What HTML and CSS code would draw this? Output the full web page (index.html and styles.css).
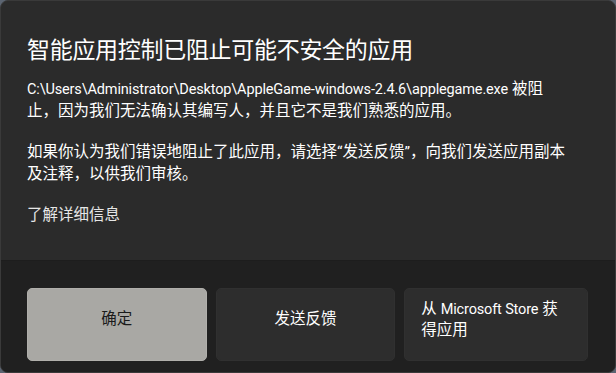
FILE: index.html
```html
<!DOCTYPE html>
<html lang="zh-CN">
<head>
  <meta charset="UTF-8">
  <title>智能应用控制</title>
  <link rel="stylesheet" href="styles.css">
</head>
<body>

  <div class="dialog">
    <div class="content">
      <h1 class="title">智能应用控制已阻止可能不安全的应用</h1>
      <p class="message"><span class="path">C:\Users\Administrator\Desktop\AppleGame-windows-2.4.6\applegame.exe</span> 被阻止，因为我们无法确认其编写人，并且它不是我们熟悉的应用。</p>
      <p class="message">如果你认为我们错误地阻止了此应用，请选择“发送反馈”，向我们发送应用副本及注释，以供我们审核。</p>
      <a class="more" href="#">了解详细信息</a>
    </div>

    <div class="footer">
      <button class="btn btn-primary">确定</button>
      <button class="btn">发送反馈</button>
      <button class="btn btn-left">从 <span class="latin">Microsoft Store</span> 获得应用</button>
    </div>
  </div>

</body>
</html>
```

FILE: styles.css
```css
* { margin: 0; padding: 0; box-sizing: border-box; }
html, body {
  width: 100%;
  height: 100%;
  background-color: #5b6471;
  overflow: hidden;
}
body {
  font-family: Roboto, 'Noto Sans CJK SC', sans-serif;
  color: #ffffff;
}
.dialog {
  width: 616px;
  height: 373px;
  display: flex;
  flex-direction: column;
  background-color: #2b2b2b;
  border: 1px solid #3a3a3a;
  border-radius: 8px;
  overflow: hidden;
}
.content {
  flex: 1;
  padding: 33px 26px 0 26px;
}
.title {
  font-family: 'Noto Sans', 'Noto Sans CJK SC', sans-serif;
  font-size: 23px;
  font-weight: normal;
  line-height: 30px;
  margin-bottom: 15px;
  letter-spacing: -0.3px;
}
.message {
  font-size: 15.5px;
  line-height: 21.5px;
  margin-bottom: 20px;
  padding-right: 16px;
}
.path, .latin {
  font-size: 14.5px;
  letter-spacing: -0.15px;
}
.more {
  display: inline-block;
  font-size: 15.5px;
  line-height: 21px;
  color: #e6e6e6;
  text-decoration: none;
  margin-top: -1px;
}
.footer {
  height: 112px;
  background-color: #202020;
  border-top: 1px solid #1d1d1d;
  display: flex;
  gap: 9px;
  padding: 27px 27px 11px 26px;
}
.btn {
  flex: 1;
  font-family: inherit;
  font-size: 15.5px;
  line-height: 21px;
  color: #ffffff;
  background-color: #2d2d2d;
  border: 1px solid #303030;
  border-radius: 5px;
  padding: 0 14px 10px 14px;
}
.btn-primary {
  background-color: #a9a8a4;
  border-color: #b0afab;
  color: #1b1b1b;
}
.btn-left {
  text-align: left;
  padding: 0 16px 10px 16px;
}
```
